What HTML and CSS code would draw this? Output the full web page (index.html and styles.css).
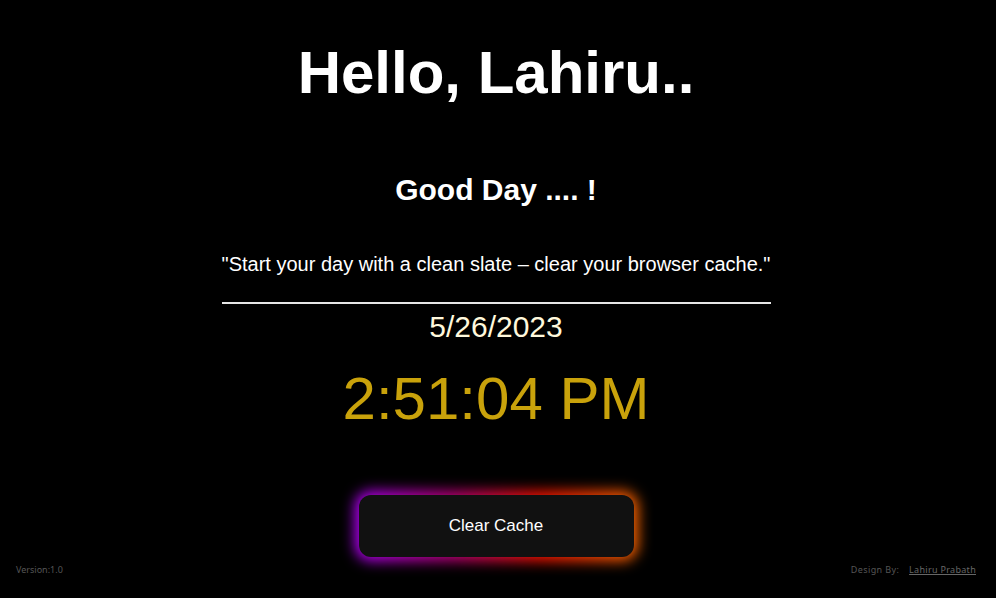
FILE: index.html
```html
<!DOCTYPE html>
<html>
<head>
<meta charset="utf-8">
<link rel="stylesheet" href="styles.css">
</head>
<body>
<main class="page">
  <h1 class="hello">Hello, Lahiru..</h1>
  <h2 class="greet">Good Day .... !</h2>
  <p class="quote">"Start your day with a clean slate – clear your browser cache."</p>
  <hr class="rule">
  <div class="date">5/26/2023</div>
  <div class="time">2:51:04 PM</div>
  <div class="btn-wrap">
    <button class="clear-btn">Clear Cache</button>
  </div>
</main>
<footer class="footer">
  <span class="version">Version:1.0</span>
  <span class="credit">Design By: <a href="#" class="author">Lahiru Prabath</a></span>
</footer>
</body>
</html>
```
FILE: styles.css
```css
html, body {
  margin: 0;
  padding: 0;
  background: #000;
  height: 100%;
}
body {
  font-family: "Liberation Sans", Arial, sans-serif;
  color: #fff;
  position: relative;
  overflow: hidden;
}
.page {
  display: flex;
  flex-direction: column;
  align-items: center;
  padding-top: 38px;
  padding-right: 4px;
}
.hello {
  margin: 0;
  font-size: 60px;
  font-weight: bold;
  line-height: 1.15;
}
.greet {
  margin: 66px 0 0;
  font-size: 30px;
  font-weight: bold;
  line-height: 1.15;
}
.quote {
  margin: 45px 0 0;
  font-size: 20px;
  line-height: 1.15;
}
.rule {
  width: 549px;
  margin: 26px 0 0;
  border: 0;
  border-top: 2px solid #e6e6e6;
  height: 0;
}
.date {
  margin-top: 6px;
  font-size: 30px;
  color: #fff8dc;
  line-height: 1.15;
}
.time {
  margin-top: 20px;
  font-size: 60px;
  color: #c9a20b;
  line-height: 1.15;
}
.btn-wrap {
  margin-top: 62px;
  position: relative;
}
.btn-wrap::before {
  content: "";
  position: absolute;
  inset: -4px;
  border-radius: 16px;
  background: linear-gradient(90deg, #b300ff 0%, #c0007a 35%, #ff1100 65%, #ff6a00 100%);
  filter: blur(7px);
  z-index: 0;
}
.clear-btn {
  position: relative;
  z-index: 1;
  width: 275px;
  height: 62px;
  border: 0;
  border-radius: 12px;
  background: #111;
  color: #fff;
  font-family: "Liberation Sans", Arial, sans-serif;
  font-size: 17px;
  cursor: pointer;
}
.footer {
  position: absolute;
  left: 16px;
  right: 20px;
  bottom: 22px;
  display: flex;
  justify-content: space-between;
  font-family: "Noto Sans", sans-serif;
  font-size: 9px;
  color: #555;
}
.author {
  margin-left: 7px;
  color: #666;
  letter-spacing: 0.3px;
}
.credit {
  letter-spacing: 0.4px;
}
```
